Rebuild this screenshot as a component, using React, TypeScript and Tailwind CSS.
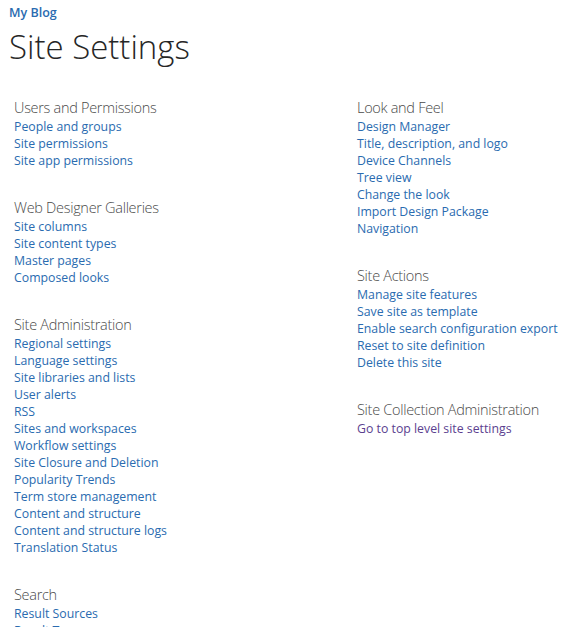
import React from "react";

type Section = { title: string; links: string[]; visited?: boolean };

const leftColumn: Section[] = [
  {
    title: "Users and Permissions",
    links: ["People and groups", "Site permissions", "Site app permissions"],
  },
  {
    title: "Web Designer Galleries",
    links: ["Site columns", "Site content types", "Master pages", "Composed looks"],
  },
  {
    title: "Site Administration",
    links: [
      "Regional settings",
      "Language settings",
      "Site libraries and lists",
      "User alerts",
      "RSS",
      "Sites and workspaces",
      "Workflow settings",
      "Site Closure and Deletion",
      "Popularity Trends",
      "Term store management",
      "Content and structure",
      "Content and structure logs",
      "Translation Status",
    ],
  },
  {
    title: "Search",
    links: ["Result Sources", "Result Types"],
  },
];

const rightColumn: Section[] = [
  {
    title: "Look and Feel",
    links: [
      "Design Manager",
      "Title, description, and logo",
      "Device Channels",
      "Tree view",
      "Change the look",
      "Import Design Package",
      "Navigation",
    ],
  },
  {
    title: "Site Actions",
    links: [
      "Manage site features",
      "Save site as template",
      "Enable search configuration export",
      "Reset to site definition",
      "Delete this site",
    ],
  },
  {
    title: "Site Collection Administration",
    links: ["Go to top level site settings"],
    visited: true,
  },
];

function LinkSection({ section }: { section: Section }) {
  return (
    <div className="mb-[28px]">
      <h3 className="text-[14.5px] font-light leading-[21px] tracking-[-0.3px] text-[#4a4a4a]">
        {section.title}
      </h3>
      <ul>
        {section.links.map((link) => (
          <li key={link} className="text-[12.3px] leading-[17px]">
            <a
              href="#"
              className={section.visited ? "text-[#5b3f8f]" : "text-[#2a6bb0]"}
            >
              {link}
            </a>
          </li>
        ))}
      </ul>
    </div>
  );
}

export default function App() {
  return (
    <div className="h-[627px] overflow-hidden bg-white font-['Open_Sans','Segoe_UI',sans-serif]">
      {/* Breadcrumb + title */}
      <div className="pl-[9px] pt-[4px]">
        <a href="#" className="block text-[12.5px] font-semibold leading-[17px] text-[#2a6bb0]">
          My Blog
        </a>
        <h1 className="mt-[6px] text-[33px] font-light leading-[40px] text-[#262626]">
          Site Settings
        </h1>
      </div>

      {/* Link sections */}
      <div className="mt-[30px] grid grid-cols-[343px_1fr] pl-[14px]">
        <div>
          {leftColumn.map((s) => (
            <LinkSection key={s.title} section={s} />
          ))}
        </div>
        <div>
          {rightColumn.map((s) => (
            <LinkSection key={s.title} section={s} />
          ))}
        </div>
      </div>
    </div>
  );
}
